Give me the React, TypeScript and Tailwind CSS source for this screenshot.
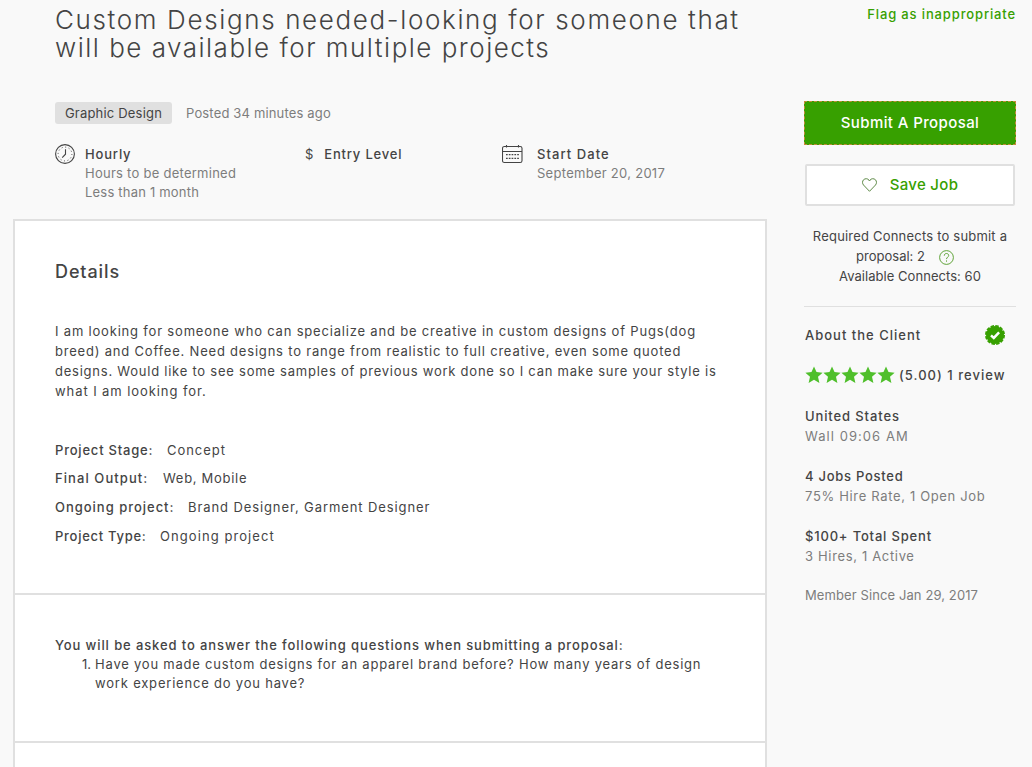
const details = [
  { text: "I am looking for someone who can specialize and be creative in custom designs of Pugs(dog", tracking: "tracking-[0.81px]" },
  { text: "breed) and Coffee. Need designs to range from realistic to full creative, even some quoted", tracking: "tracking-[0.8px]" },
  { text: "designs. Would like to see some samples of previous work done so I can make sure your style is", tracking: "tracking-[0.76px]" },
  { text: "what I am looking for.", tracking: "tracking-[0.92px]" },
];

const projectInfo = [
  { label: "Project Stage:", value: "Concept", labelClass: "w-[112px] tracking-[0.79px]", valueClass: "tracking-[0.95px]", height: "h-[28px]" },
  { label: "Final Output:", value: "Web, Mobile", labelClass: "w-[108px] tracking-[1.08px]", valueClass: "tracking-[0.7px]", height: "h-[29px]" },
  { label: "Ongoing project:", value: "Brand Designer, Garment Designer", labelClass: "w-[133px] tracking-[0.98px]", valueClass: "tracking-[0.9px]", height: "h-[29px]" },
  { label: "Project Type:", value: "Ongoing project", labelClass: "w-[105px] tracking-[0.73px]", valueClass: "tracking-[1.07px]", height: "h-[20px]" },
];

const clientStats = [
  { title: "United States", note: "Wall 09:06 AM", titleClass: "tracking-[0.88px]", noteClass: "tracking-[1.05px]" },
  { title: "4 Jobs Posted", note: "75% Hire Rate, 1 Open Job", titleClass: "tracking-[0.73px]", noteClass: "tracking-[0.66px]" },
  { title: "$100+ Total Spent", note: "3 Hires, 1 Active", titleClass: "tracking-[0.82px]", noteClass: "tracking-[0.66px]" },
];

const ClockIcon = () => (
  <svg width="20" height="20" viewBox="0 0 20 20" fill="none" stroke="#444" className="shrink-0">
    <circle cx="10" cy="10" r="9.4" strokeWidth="1.1" />
    <circle cx="10" cy="10" r="6.9" strokeWidth="1" strokeDasharray="1 2.61" />
    <path d="M10.5 5.2v5L7.2 13.6" strokeWidth="1.1" />
  </svg>
);

const CalendarIcon = () => (
  <svg width="21" height="19" viewBox="0 0 21 19" fill="none" stroke="#444" className="mt-px shrink-0">
    <rect x="0.5" y="1.5" width="19.5" height="16" rx="1.8" strokeWidth="1.1" />
    <path d="M0.6 6.5H20M4.5 0v2.5M16.5 0v2.5" strokeWidth="1.1" />
    <path d="M4 9.6h13M4 13.4h13" strokeWidth="1.3" strokeDasharray="1.7 1.1" />
  </svg>
);

const HeartIcon = () => (
  <svg width="15" height="14" viewBox="0 0 15 14" fill="none" stroke="#4d7d33" strokeWidth="0.9">
    <path d="M7.5 13.3L1.5 7C0.2 5.5 0.2 3.3 1.5 1.8C3.1 0.2 5.9 0.4 7 2.2L7.5 3L8 2.2C9.1 0.4 11.9 0.2 13.5 1.8C14.8 3.3 14.8 5.5 13.5 7Z" />
  </svg>
);

const HelpIcon = () => (
  <svg width="15" height="15" viewBox="0 0 15 15" fill="none" stroke="#4f9a24" strokeWidth="0.9" className="mt-[2px]">
    <circle cx="7.5" cy="7.5" r="6.9" />
    <path d="M5.3 5.7C5.3 4.2 6.2 3.5 7.5 3.5S9.7 4.3 9.7 5.6C9.7 7.1 7.5 7.2 7.5 9.1M7.5 10.4v1.3" />
  </svg>
);

const VerifiedIcon = () => (
  <svg width="20" height="20" viewBox="0 0 20 20">
    <circle cx="10" cy="10" r="9" fill="#37a000" />
    <circle cx="10" cy="10" r="9.1" fill="none" stroke="#37a000" strokeWidth="1.8" strokeDasharray="3.5 1.265" />
    <path d="M6 10.3l2.8 2.6 5.3-5.5" fill="none" stroke="#fff" strokeWidth="2.5" />
  </svg>
);

const StarIcon = () => (
  <svg width="18" height="18" viewBox="0 0 18 18">
    <path d="M9 0.4l2.5 5.7 6.1.6-4.6 4.1 1.4 6.2L9 13.8l-5.4 3.2 1.4-6.2L.4 6.7l6.1-.6z" fill="#4fbf2b" />
  </svg>
);

const JobHeader = () => (
  <header className="h-[219px] pl-[42px] pt-[6px]">
    <h1 className="text-[26px] leading-[28px] font-light whitespace-nowrap">
      <div className="tracking-[1.64px]">Custom Designs needed-looking for someone that</div>
      <div className="tracking-[1.49px]">will be available for multiple projects</div>
    </h1>
    <div className="mt-[40px] flex items-center gap-[14px]">
      <span className="flex h-[22px] w-[117px] items-center justify-center rounded-[3px] bg-[#e0e0e0] tracking-[0.2px]">
        Graphic Design
      </span>
      <span className="text-[#7d7d7d] tracking-[0.16px]">Posted 34 minutes ago</span>
    </div>
    <div className="mt-[20px] flex leading-[19px]">
      <div className="flex w-[250px] gap-[10px]">
        <ClockIcon />
        <div className="pt-px text-[#7d7d7d]">
          <div className="font-medium text-[#444] tracking-[0.83px]">Hourly</div>
          <div className="tracking-[0.26px]">Hours to be determined</div>
          <div className="tracking-[0.2px]">Less than 1 month</div>
        </div>
      </div>
      <div className="flex w-[197px] gap-[11px] pt-px">
        <span>$</span>
        <span className="font-medium tracking-[0.8px]">Entry Level</span>
      </div>
      <div className="flex gap-[14px]">
        <CalendarIcon />
        <div className="pt-px text-[#7d7d7d]">
          <div className="font-medium text-[#444] tracking-[1.07px]">Start Date</div>
          <div className="tracking-[0.28px]">September 20, 2017</div>
        </div>
      </div>
    </div>
  </header>
);

const JobDetails = () => (
  <main className="h-[560px] w-[754px] border-2 border-[#e0e0e0] bg-white whitespace-nowrap">
    <section className="h-[374px] border-b-2 border-[#e0e0e0] px-[40px] pt-[39px]">
      <h2 className="text-[18px] leading-[24px] font-medium tracking-[0.9px]">Details</h2>
      <div className="mt-[37px] leading-[20px]">
        {details.map((line) => (
          <div key={line.text} className={line.tracking}>{line.text}</div>
        ))}
      </div>
      <div className="mt-[39px] leading-[20px]">
        {projectInfo.map((row) => (
          <div key={row.label} className={`flex ${row.height}`}>
            <span className={`font-medium ${row.labelClass}`}>{row.label}</span>
            <span className={row.valueClass}>{row.value}</span>
          </div>
        ))}
      </div>
    </section>
    <section className="h-[148px] border-b-2 border-[#e0e0e0] px-[40px] pt-[41px] leading-[19px]">
      <h3 className="font-medium tracking-[0.89px]">
        You will be asked to answer the following questions when submitting a proposal:
      </h3>
      <div className="flex gap-[4px] pl-[27px]">
        <span>1.</span>
        <div>
          <div className="tracking-[0.78px]">Have you made custom designs for an apparel brand before? How many years of design</div>
          <div className="tracking-[0.8px]">work experience do you have?</div>
        </div>
      </div>
    </section>
  </main>
);

const Sidebar = () => (
  <aside className="ml-[37px] w-[212px] leading-[20px] whitespace-nowrap">
    <div className="flex h-[101px] justify-end pt-[4px] font-medium text-[#37a000]">
      <a className="tracking-[0.86px]">Flag as inappropriate</a>
    </div>
    <button className="flex h-[44px] w-[212px] items-center justify-center border border-dashed border-[#c58a3a] bg-[#37a000] text-[15px] font-medium text-white tracking-[0.4px]">
      Submit A Proposal
    </button>
    <button className="mt-[19px] ml-px flex h-[42px] w-[210px] items-center justify-center gap-[13px] rounded-[2px] border-2 border-[#e0e0e0] bg-white text-[15px] font-medium text-[#37a000]">
      <HeartIcon />
      <span className="tracking-[0.3px]">Save Job</span>
    </button>
    <div className="mt-[20px] flex flex-col items-center">
      <div className="tracking-[0.2px]">Required Connects to submit a</div>
      <div className="flex h-[20px] items-center gap-[14px] pr-[10px]">
        <span className="tracking-[0px]">proposal: 2</span>
        <HelpIcon />
      </div>
      <div className="tracking-[0.05px]">Available Connects: 60</div>
    </div>
    <div className="mt-[20px] border-t border-[#e0e0e0] pt-[18px] pl-px">
      <div className="flex items-center justify-between pr-[11px]">
        <h3 className="font-medium tracking-[1px]">About the Client</h3>
        <VerifiedIcon />
      </div>
      <div className="mt-[20px] flex items-center">
        <StarIcon />
        <StarIcon />
        <StarIcon />
        <StarIcon />
        <StarIcon />
        <span className="ml-[4px] font-medium tracking-[1.03px]">(5.00) 1 review</span>
      </div>
      <div className="mt-[21px] flex flex-col gap-[20px]">
        {clientStats.map((stat) => (
          <div key={stat.title}>
            <div className={`font-medium ${stat.titleClass}`}>{stat.title}</div>
            <div className={`text-[#7d7d7d] ${stat.noteClass}`}>{stat.note}</div>
          </div>
        ))}
      </div>
      <div className="mt-[19px] text-[#7d7d7d] tracking-[0.1px]">Member Since Jan 29, 2017</div>
    </div>
  </aside>
);

const App = () => {
  return (
    <div className="flex h-[767px] w-[1032px] overflow-hidden bg-[#f9f9f9] pl-[13px] font-['Inter','Liberation_Sans',sans-serif] text-[13px] leading-[20px] text-[#444]">
      <div className="w-[754px] shrink-0">
        <JobHeader />
        <JobDetails />
      </div>
      <Sidebar />
    </div>
  );
};

export default App;
